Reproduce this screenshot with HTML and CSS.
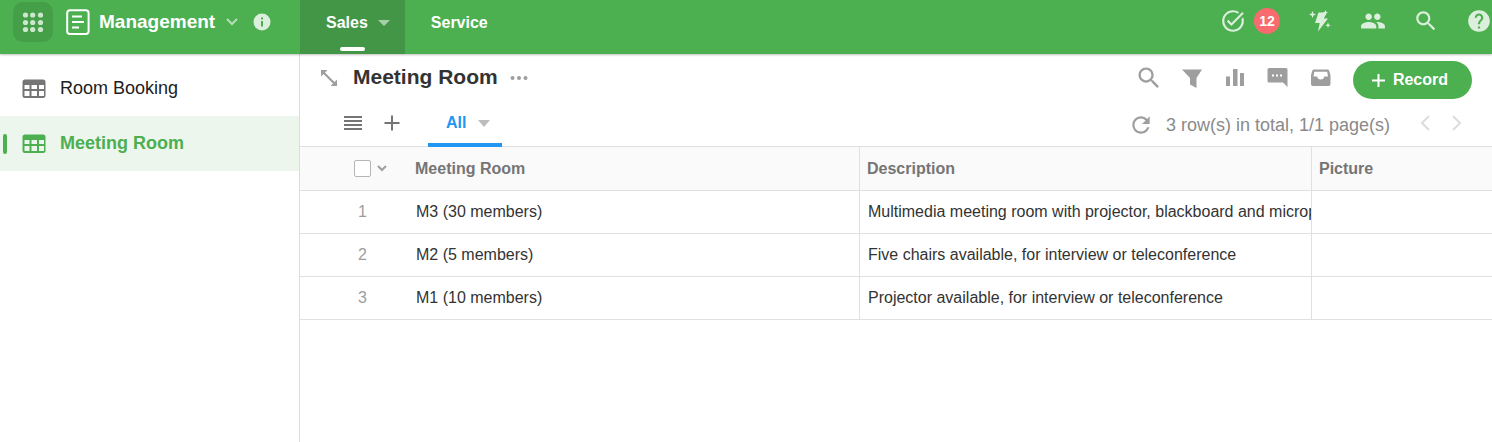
FILE: index.html
```html
<!DOCTYPE html>
<html lang="en">
<head>
    <meta charset="UTF-8">
    <meta name="viewport" content="width=device-width, initial-scale=1.0">
    <title>Meeting Room - Management</title>
    <link rel="stylesheet" href="styles.css">
</head>
<body>
    <header class="topbar">
        <div class="brand">
            <button class="apps-btn" type="button" aria-label="Apps">
                <svg width="22" height="22" viewBox="0 0 22 22">
                    <circle cx="3.500" cy="4" r="2.6"/><circle cx="10.700" cy="4" r="2.6"/><circle cx="18.500" cy="4" r="2.6"/>
                    <circle cx="3.500" cy="11.500" r="2.6"/><circle cx="10.700" cy="11.500" r="2.6"/><circle cx="18.500" cy="11.500" r="2.6"/>
                    <circle cx="3.500" cy="18.500" r="2.6"/><circle cx="10.700" cy="18.500" r="2.6"/><circle cx="18.500" cy="18.500" r="2.6"/>
                </svg>
            </button>
            <svg class="brand-icon" width="24" height="26" viewBox="0 0 24 26">
                <rect x="1.2" y="1.2" width="21.4" height="23.8" rx="2.8"/>
                <path d="M6 7.500h10M6 13h12M6 18.500h7"/>
            </svg>
            <button class="brand-name" type="button">
                Management
                <svg width="14" height="10" viewBox="0 0 14 10"><path d="M2 2l5 5 5-5"/></svg>
            </button>
            <button class="icon-btn" type="button" aria-label="Information">
                <svg width="18" height="18" viewBox="0 0 18 18">
                    <path fill-rule="evenodd" d="M9 .5a8.500 8.500 0 1 0 0 17a8.500 8.500 0 1 0 0-17zM8 4.500h2v2H8zM8 8h2v5.500H8z"/>
                </svg>
            </button>
        </div>
        <nav class="tabs">
            <a class="tab active" href="#sales">
                Sales
                <svg width="12" height="6" viewBox="0 0 12 6"><path d="M0 0h12L6 6z"/></svg>
            </a>
            <a class="tab" href="#service">Service</a>
        </nav>
        <div class="actions">
            <button class="icon-btn task-btn" type="button" aria-label="Tasks">
                <svg width="26" height="26" viewBox="0 0 24 24"><path d="M22 5.180 10.590 16.600l-4.240-4.240 1.410-1.410 2.830 2.830 10-10L22 5.180zM19.790 10.220C19.920 10.790 20 11.390 20 12c0 4.420-3.580 8-8 8s-8-3.580-8-8 3.580-8 8-8c1.580 0 3.040.46 4.280 1.250l1.440-1.440C16.100 2.670 14.130 2 12 2 6.480 2 2 6.480 2 12s4.480 10 10 10 10-4.480 10-10c0-1.190-.22-2.330-.6-3.390l-1.610 1.610z"/></svg>
                <span class="badge">12</span>
            </button>
            <button class="icon-btn" type="button" aria-label="Quick actions">
                <svg width="26" height="26" viewBox="0 0 26 26"><path d="M11.500 4.500h8.500l-3.200 6H21L11 23.500l1.700-8.500H8zM5.500 3l1 2.500L9 6.500 6.500 7.500l-1 2.500-1-2.500L2 6.500l2.500-1zM18.500 2l.7 1.800 1.800.7-1.800.7-.7 1.800-.7-1.800-1.800-.7 1.800-.7zM21 14.500l.8 2 2 .8-2 .8-.8 2-.8-2-2-.8 2-.8z"/></svg>
            </button>
            <button class="icon-btn" type="button" aria-label="People">
                <svg width="26" height="26" viewBox="0 0 24 24"><path d="M16 11c1.660 0 2.990-1.340 2.990-3S17.660 5 16 5c-1.660 0-3 1.340-3 3s1.340 3 3 3zm-8 0c1.660 0 2.990-1.340 2.990-3S9.660 5 8 5C6.340 5 5 6.340 5 8s1.340 3 3 3zm0 2c-2.330 0-7 1.170-7 3.500V19h14v-2.500c0-2.330-4.670-3.500-7-3.500zm8 0c-.29 0-.62.02-.97.05 1.160.84 1.970 1.970 1.970 3.450V19h6v-2.500c0-2.330-4.670-3.500-7-3.500z"/></svg>
            </button>
            <button class="icon-btn" type="button" aria-label="Search">
                <svg width="26" height="26" viewBox="0 0 24 24"><path d="M15.500 14h-.79l-.28-.27C15.410 12.590 16 11.110 16 9.500 16 5.910 13.090 3 9.500 3S3 5.910 3 9.500 5.910 16 9.500 16c1.610 0 3.090-.59 4.230-1.570l.27.28v.79l5 4.990L20.490 19l-4.990-5zm-6 0C7.010 14 5 11.990 5 9.500S7.010 5 9.500 5 14 7.010 14 9.500 11.990 14 9.500 14z"/></svg>
            </button>
            <button class="icon-btn" type="button" aria-label="Help">
                <svg width="26" height="26" viewBox="0 0 24 24"><path d="M12 2C6.480 2 2 6.480 2 12s4.480 10 10 10 10-4.480 10-10S17.520 2 12 2zm1 17h-2v-2h2v2zm2.070-7.750l-.9.92C13.450 12.900 13 13.500 13 15h-2v-.5c0-1.100.45-2.100 1.170-2.830l1.240-1.260c.37-.36.59-.86.59-1.410 0-1.100-.9-2-2-2s-2 .9-2 2H8c0-2.210 1.790-4 4-4s4 1.790 4 4c0 .88-.36 1.680-.93 2.250z"/></svg>
            </button>
        </div>
    </header>

    <div class="layout">
        <nav class="sidebar">
            <a class="side-item" href="#room-booking">
                <svg width="24" height="20" viewBox="0 0 24 20"><path fill-rule="evenodd" d="M3 .5h18a2.500 2.500 0 0 1 2.500 2.500v13.500a2.500 2.500 0 0 1-2.500 2.500H3a2.500 2.500 0 0 1-2.500-2.500V3A2.500 2.500 0 0 1 3 .5zM2.500 6v4h5V6zM9.500 6v4h5.500V6zM17 6v4h5V6zM2.500 12v5h5v-5zM9.500 12v5h5.500v-5zM17 12v5h5v-5z"/></svg>
                Room Booking
            </a>
            <a class="side-item active" href="#meeting-room">
                <svg width="24" height="20" viewBox="0 0 24 20"><path fill-rule="evenodd" d="M3 .5h18a2.500 2.500 0 0 1 2.500 2.500v13.500a2.500 2.500 0 0 1-2.500 2.500H3a2.500 2.500 0 0 1-2.500-2.500V3A2.500 2.500 0 0 1 3 .5zM2.500 6v4h5V6zM9.500 6v4h5.500V6zM17 6v4h5V6zM2.500 12v5h5v-5zM9.500 12v5h5.500v-5zM17 12v5h5v-5z"/></svg>
                Meeting Room
            </a>
        </nav>

        <main class="content">
            <div class="title-row">
                <button class="icon-btn" type="button" aria-label="Expand">
                    <svg width="18" height="18" viewBox="0 0 18 18"><path d="M1 1h6.500L5 3.500 14.500 13 17 10.500V17h-6.500l2.500-2.500L3.500 5 1 7.500z"/></svg>
                </button>
                <h1>Meeting Room</h1>
                <button class="icon-btn" type="button" aria-label="More">
                    <svg width="18" height="6" viewBox="0 0 18 6"><circle cx="2.500" cy="3" r="2"/><circle cx="9" cy="3" r="2"/><circle cx="15.500" cy="3" r="2"/></svg>
                </button>
                <div class="tools">
                    <button class="icon-btn" type="button" aria-label="Search records">
                        <svg width="28" height="28" viewBox="0 0 24 24"><path d="M15.500 14h-.79l-.28-.27C15.410 12.590 16 11.110 16 9.500 16 5.910 13.090 3 9.500 3S3 5.910 3 9.500 5.910 16 9.500 16c1.610 0 3.090-.59 4.230-1.570l.27.28v.79l5 4.990L20.490 19l-4.990-5zm-6 0C7.010 14 5 11.990 5 9.500S7.010 5 9.500 5 14 7.010 14 9.500 11.990 14 9.500 14z"/></svg>
                    </button>
                    <button class="icon-btn" type="button" aria-label="Filter">
                        <svg width="28" height="28" viewBox="0 0 28 28"><path d="M4 5.500h20l-5.500 8.500v10L12 20.500V14z"/></svg>
                    </button>
                    <button class="icon-btn" type="button" aria-label="Statistics">
                        <svg width="28" height="28" viewBox="0 0 28 28"><path d="M5 12.500h4v9.500H5zM12 5h4.500v17H12zM19 9h4v13h-4z"/></svg>
                    </button>
                    <button class="icon-btn" type="button" aria-label="Comments">
                        <svg width="28" height="28" viewBox="0 0 28 28"><path fill-rule="evenodd" d="M5 4h17a1.500 1.500 0 0 1 1.500 1.500V23L19 18.500H5A1.500 1.500 0 0 1 3.500 17V5.500A1.500 1.500 0 0 1 5 4zM8 10.500v2h2v-2zM12 10.500v2h2v-2zM16 10.500v2h2v-2z"/></svg>
                    </button>
                    <button class="icon-btn" type="button" aria-label="Inbox">
                        <svg width="28" height="28" viewBox="0 0 28 28"><path fill-rule="evenodd" d="M7 5.500h13.500a1.800 1.800 0 0 1 1.700 1.200L23.500 11v9a2 2 0 0 1-2 2H6a2 2 0 0 1-2-2v-9l1.300-4.300A1.800 1.800 0 0 1 7 5.500zM7.300 7.800L6.500 12.500h3.700a3.600 3.600 0 0 0 7.100 0H21l-.8-4.700z"/></svg>
                    </button>
                </div>
                <button class="record-btn" type="button">
                    <svg width="13" height="13" viewBox="0 0 13 13"><path d="M6.500 0v13M0 6.500h13"/></svg>
                    Record
                </button>
            </div>

            <div class="view-row">
                <button class="icon-btn" type="button" aria-label="View list">
                    <svg width="18" height="16" viewBox="0 0 18 16"><path d="M0 1h18v2H0zM0 5h18v2H0zM0 9h18v2H0zM0 13h18v2H0z"/></svg>
                </button>
                <button class="icon-btn" type="button" aria-label="Add view">
                    <svg width="16" height="16" viewBox="0 0 16 16"><path d="M7 .5h2V7h6.500v2H9v6.500H7V9H.5V7H7z"/></svg>
                </button>
                <button class="view-tab" type="button">
                    All
                    <svg width="12" height="7" viewBox="0 0 12 7"><path d="M0 0h12L6 7z"/></svg>
                </button>
                <div class="pager">
                    <button class="icon-btn" type="button" aria-label="Refresh">
                        <svg width="26" height="26" viewBox="0 0 24 24"><path d="M17.650 6.350C16.200 4.900 14.210 4 12 4c-4.420 0-7.990 3.580-7.990 8s3.570 8 7.990 8c3.730 0 6.840-2.550 7.730-6h-2.080c-.82 2.330-3.040 4-5.650 4-3.310 0-6-2.690-6-6s2.690-6 6-6c1.660 0 3.140.69 4.220 1.780L13 11h7V4l-2.350 2.350z"/></svg>
                    </button>
                    <span>3 row(s) in total, 1/1 page(s)</span>
                    <button class="page-btn" type="button" aria-label="Previous page">
                        <svg width="11" height="16" viewBox="0 0 11 16"><path d="M9 1L2 8l7 7"/></svg>
                    </button>
                    <button class="page-btn" type="button" aria-label="Next page">
                        <svg width="11" height="16" viewBox="0 0 11 16"><path d="M2 1l7 7-7 7"/></svg>
                    </button>
                </div>
            </div>

            <table class="records">
                <thead>
                    <tr>
                        <th class="col-num">
                            <div class="select-all">
                                <input type="checkbox" aria-label="Select all rows">
                                <svg width="10" height="7" viewBox="0 0 10 7"><path d="M1 1l4 4 4-4"/></svg>
                            </div>
                        </th>
                        <th class="col-text">Meeting Room</th>
                        <th class="col-text">Description</th>
                        <th>Picture</th>
                    </tr>
                </thead>
                <tbody>
                    <tr>
                        <td class="num">1</td>
                        <td>M3 (30 members)</td>
                        <td>Multimedia meeting room with projector, blackboard and microphone</td>
                        <td></td>
                    </tr>
                    <tr>
                        <td class="num">2</td>
                        <td>M2 (5 members)</td>
                        <td>Five chairs available, for interview or teleconference</td>
                        <td></td>
                    </tr>
                    <tr>
                        <td class="num">3</td>
                        <td>M1 (10 members)</td>
                        <td>Projector available, for interview or teleconference</td>
                        <td></td>
                    </tr>
                </tbody>
            </table>
        </main>
    </div>
</body>
</html>
```
FILE: styles.css
```css
* {
    box-sizing: border-box;
    margin: 0;
    padding: 0;
}
body {
    min-height: 100vh;
    display: flex;
    flex-direction: column;
    background: #fff;
    color: #333;
    font-family: "Liberation Sans", Arial, sans-serif;
    font-size: 16px;
}
button {
    border: none;
    background: none;
    font: inherit;
    color: inherit;
    cursor: pointer;
}
a {
    color: inherit;
    text-decoration: none;
}
svg {
    display: block;
    flex-shrink: 0;
    fill: currentColor;
}

/* top bar */
.topbar {
    height: 54px;
    display: flex;
    background: #4caf50;
    color: #fff;
    box-shadow: 0 1px 2px rgba(0, 0, 0, 0.25);
    position: relative;
}
.brand {
    width: 300px;
    flex-shrink: 0;
    display: flex;
    align-items: center;
    padding: 0 0 10px 13px;
}
.apps-btn {
    width: 40px;
    height: 40px;
    display: flex;
    align-items: center;
    justify-content: center;
    border-radius: 10px;
    background: #459e48;
    color: #cde7ce;
}
.brand-icon {
    margin: 0 9px 0 13px;
    fill: none;
    stroke: #fff;
    stroke-width: 2;
}
.brand-name {
    display: flex;
    align-items: center;
    gap: 10px;
    font-size: 19px;
    font-weight: bold;
}
.brand-name svg {
    fill: none;
    stroke: #b7dfb9;
    stroke-width: 2;
}
.icon-btn {
    display: flex;
    align-items: center;
    color: #9e9e9e;
}
.topbar .icon-btn {
    color: #dbefdc;
}
.brand .icon-btn {
    margin-left: 14px;
}
.tabs {
    display: flex;
}
.tab {
    display: flex;
    align-items: center;
    gap: 10px;
    padding: 0 26px 8px;
    font-weight: bold;
}
.tab.active {
    position: relative;
    padding-right: 15px;
    background: #439646;
}
.tab.active svg {
    fill: #a8cfaa;
}
.tab.active::after {
    content: "";
    position: absolute;
    left: 40px;
    bottom: 3px;
    width: 25px;
    height: 4px;
    border-radius: 2px;
    background: #fff;
}
.actions {
    margin-left: auto;
    display: flex;
    align-items: center;
    gap: 27px;
    padding-bottom: 13px;
}
.task-btn {
    gap: 8px;
}
.badge {
    width: 26px;
    height: 26px;
    border-radius: 50%;
    background: #f96b6e;
    color: #fff;
    font-size: 14px;
    font-weight: bold;
    line-height: 26px;
    text-align: center;
}

/* sidebar */
.layout {
    flex: 1;
    display: flex;
}
.sidebar {
    width: 300px;
    flex-shrink: 0;
    padding-top: 7px;
    border-right: 1px solid #dcdcdc;
}
.side-item {
    height: 55px;
    display: flex;
    align-items: center;
    gap: 14px;
    padding-left: 22px;
    color: #212121;
    font-size: 18px;
}
.side-item svg {
    fill: #757575;
}
.side-item.active {
    position: relative;
    background: #ecf6ed;
    color: #4caf50;
    font-weight: bold;
}
.side-item.active svg {
    fill: #4caf50;
}
.side-item.active::before {
    content: "";
    position: absolute;
    left: 3px;
    top: 18px;
    width: 4px;
    height: 20px;
    border-radius: 2px;
    background: #4caf50;
}

/* content */
.content {
    flex: 1;
    min-width: 0;
}
.title-row {
    height: 50px;
    display: flex;
    align-items: center;
    padding: 2px 20px 0;
}
.title-row .icon-btn {
    margin-bottom: 4px;
}
.title-row h1 {
    margin: 0 12px 6px 15px;
    font-size: 21px;
    white-space: nowrap;
}
.tools {
    margin-left: auto;
    display: flex;
    gap: 15px;
}
.record-btn {
    height: 38px;
    display: flex;
    align-items: center;
    gap: 8px;
    margin-left: 18px;
    padding: 0 24px 0 19px;
    border-radius: 19px;
    background: #4caf50;
    color: #fff;
    font-weight: bold;
}
.record-btn svg {
    stroke: #fff;
    stroke-width: 2;
}
.view-row {
    height: 43px;
    display: flex;
    align-items: center;
    padding: 0 30px 0 44px;
    border-bottom: 1px solid #e0e0e0;
}
.view-row > .icon-btn {
    margin: 0 22px 4px 0;
    color: #757575;
}
.view-tab {
    height: 43px;
    display: flex;
    align-items: center;
    gap: 12px;
    margin-left: 6px;
    padding: 0 12px 0 18px;
    border-bottom: 4px solid #2196f3;
    color: #2196f3;
    font-weight: bold;
}
.view-tab svg {
    fill: #bdbdbd;
}
.pager {
    margin-left: auto;
    display: flex;
    align-items: center;
    color: #8a8a8a;
    font-size: 18px;
}
.pager span {
    margin: 0 30px 0 12px;
    white-space: nowrap;
}
.page-btn {
    margin-bottom: 4px;
}
.page-btn + .page-btn {
    margin-left: 20px;
}
.page-btn svg {
    fill: none;
    stroke: #dcdcdc;
    stroke-width: 2;
}

/* records */
.records {
    width: 100%;
    table-layout: fixed;
    border-collapse: separate;
    border-spacing: 0;
}
.records th,
.records td {
    height: 43px;
    padding: 0 0 0 8px;
    border-bottom: 1px solid #e0e0e0;
    border-right: 1px solid #e0e0e0;
    text-align: left;
    white-space: nowrap;
    overflow: hidden;
}
.records th {
    height: 44px;
    padding-left: 7px;
    background: #fafafa;
    color: #757575;
}
.records th:first-child,
.records td:first-child,
.records th:last-child,
.records td:last-child {
    border-right: none;
}
.col-num {
    width: 108px;
}
.col-text {
    width: 452px;
}
.select-all {
    display: flex;
    align-items: center;
    gap: 6px;
    padding-left: 47px;
}
.select-all input {
    appearance: none;
    width: 17px;
    height: 17px;
    border: 1px solid #b5b5b5;
    border-radius: 2px;
    background: #fff;
}
.select-all svg {
    fill: none;
    stroke: #9e9e9e;
    stroke-width: 2;
}
.records td.num {
    padding-left: 58px;
    color: #9e9e9e;
}
```
